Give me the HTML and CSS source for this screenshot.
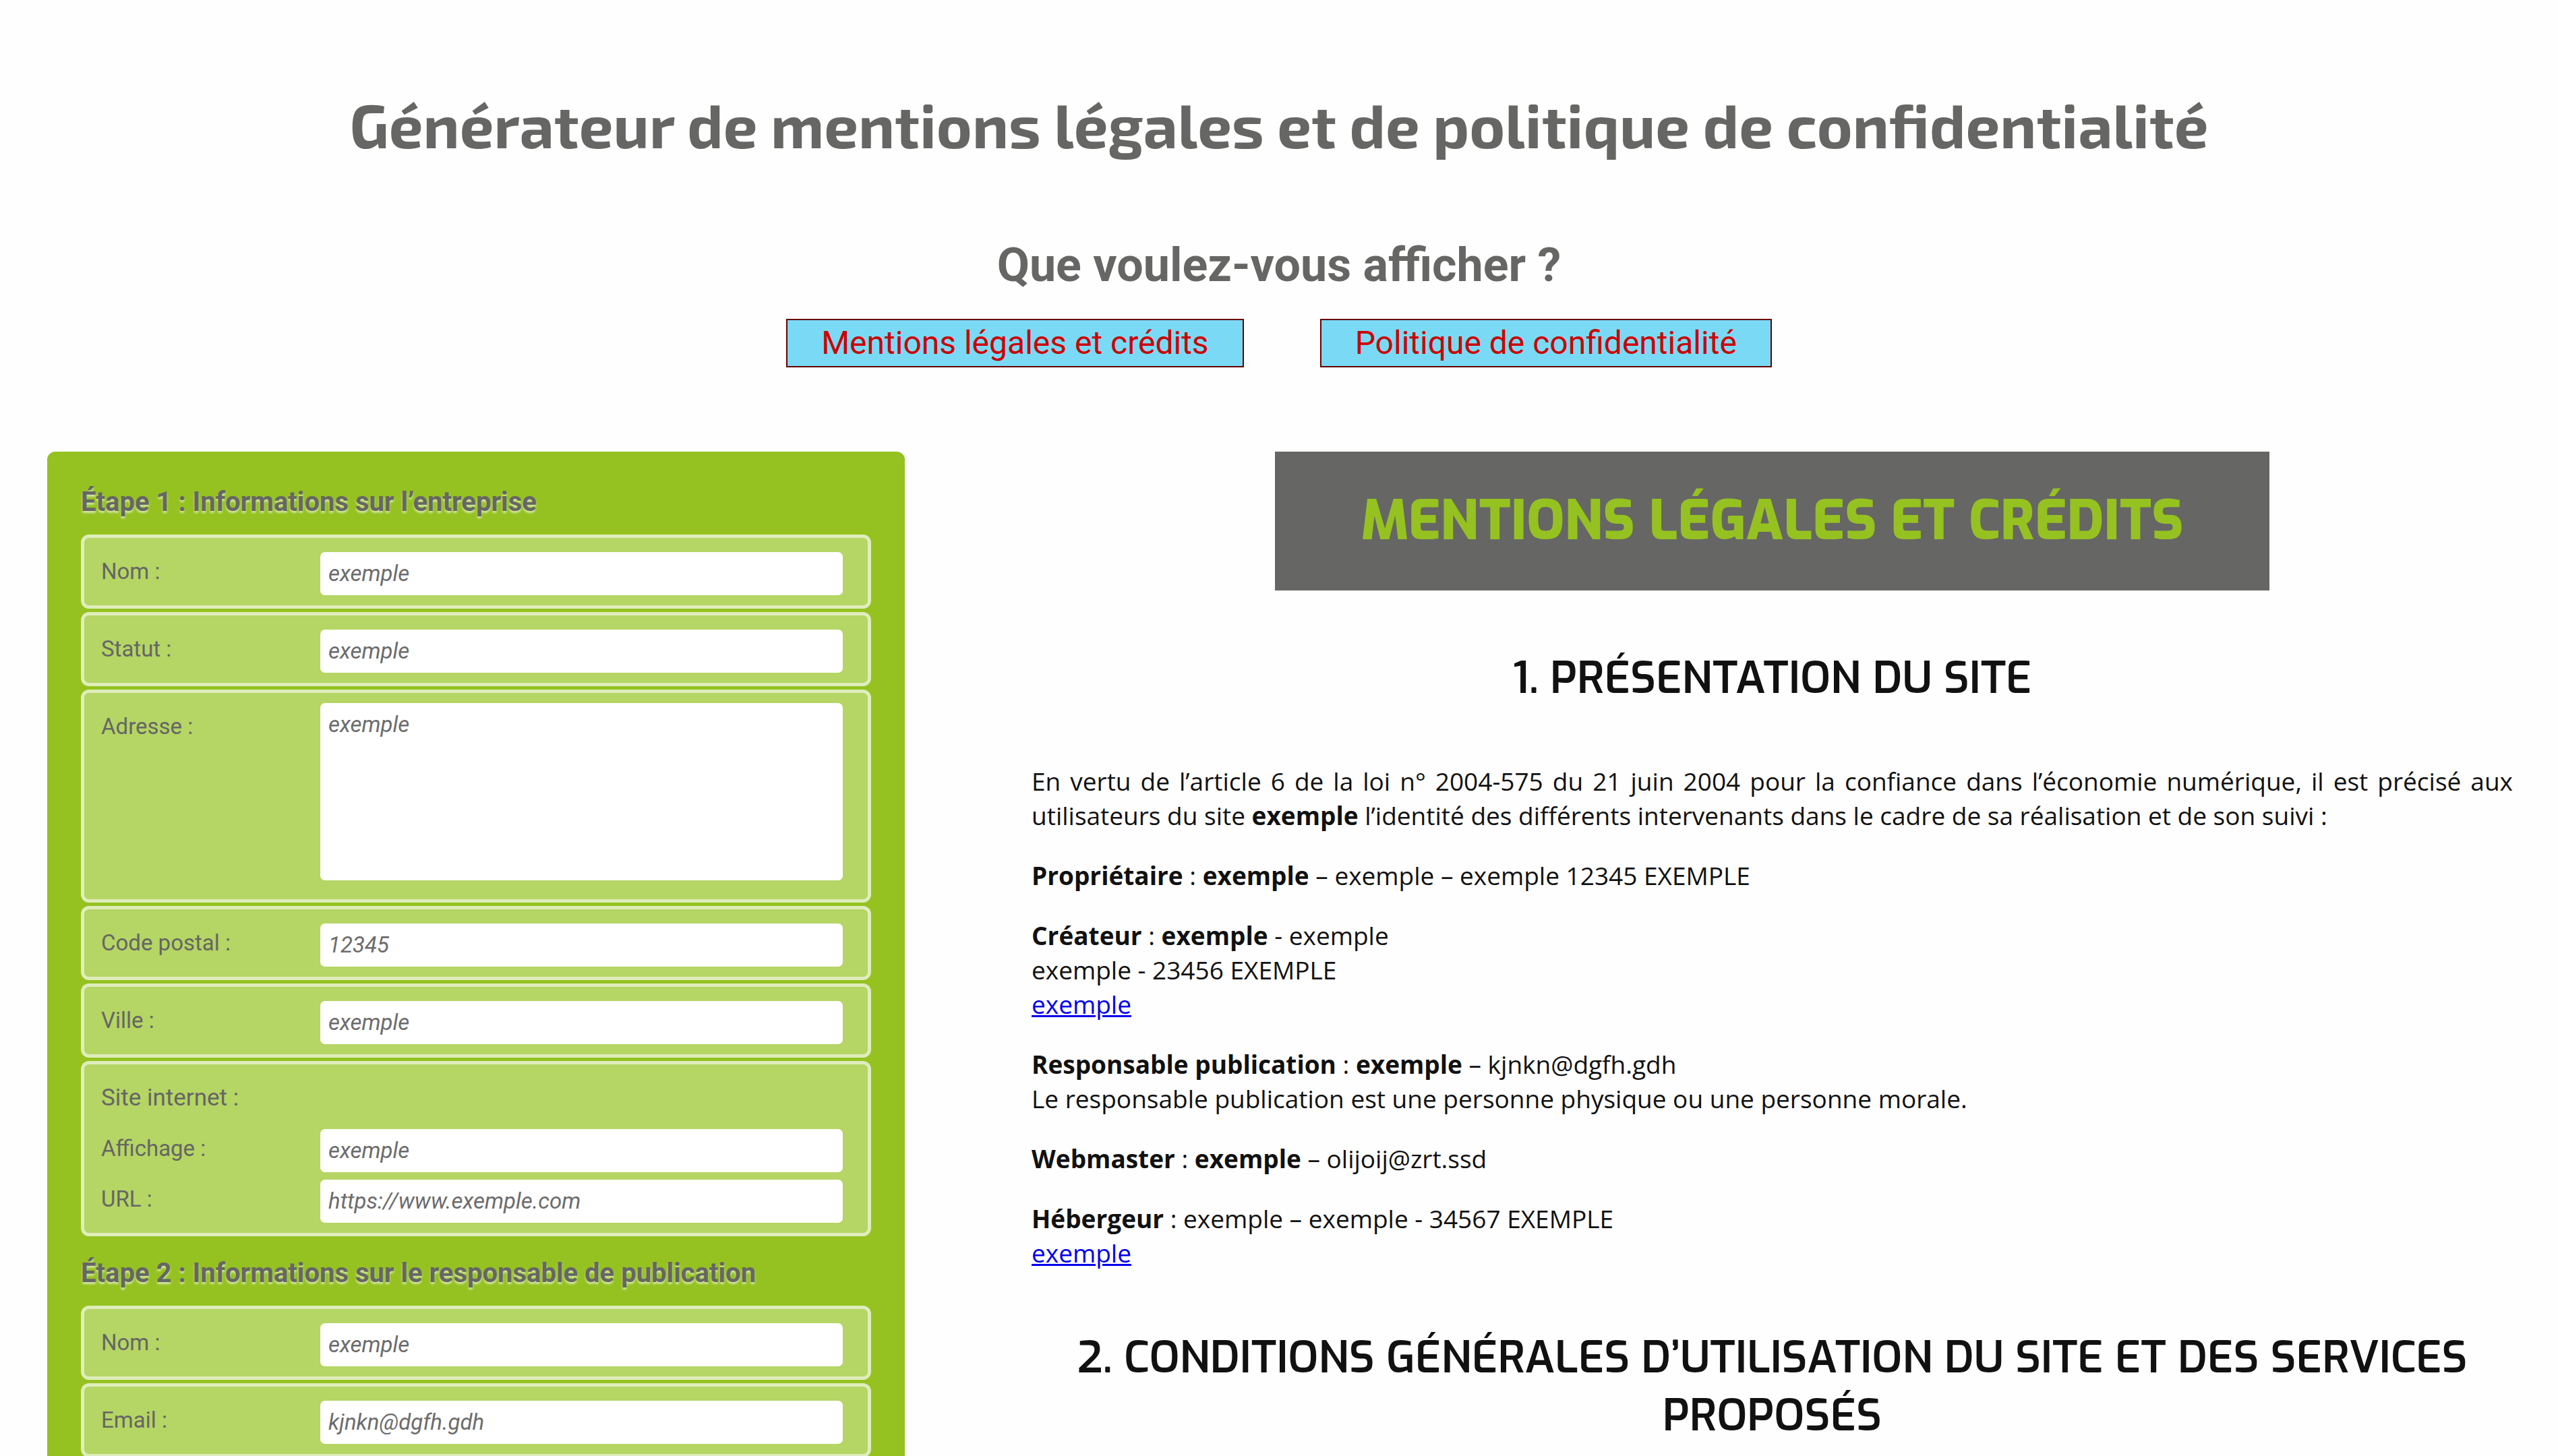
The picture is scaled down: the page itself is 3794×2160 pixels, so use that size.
FILE: index.html
```html
<!DOCTYPE html>
<html lang="fr">
<head>
<meta charset="utf-8">
<title>Générateur de mentions légales</title>
<link rel="stylesheet" href="styles.css">
</head>
<body>
<header class="header">
  <h1 class="title">Générateur de mentions légales et de politique de confidentialité</h1>
  <h2 class="question">Que voulez-vous afficher ?</h2>
  <div class="choices">
    <button type="button" class="choice">Mentions légales et crédits</button>
    <button type="button" class="choice">Politique de confidentialité</button>
  </div>
</header>
<main class="main">
  <form class="form">
    <h3 class="step">Étape 1 : Informations sur l’entreprise</h3>
    <div class="rows">
      <div class="row"><label for="nom">Nom :</label><input id="nom" type="text" value="exemple"></div>
      <div class="row"><label for="statut">Statut :</label><input id="statut" type="text" value="exemple"></div>
      <div class="row"><label for="adresse">Adresse :</label><textarea id="adresse">exemple</textarea></div>
      <div class="row"><label for="cp">Code postal :</label><input id="cp" type="text" value="12345"></div>
      <div class="row"><label for="ville">Ville :</label><input id="ville" type="text" value="exemple"></div>
      <div class="row">
        <span class="group">Site internet :</span>
        <label for="affichage">Affichage :</label><input id="affichage" type="text" value="exemple">
        <label for="url">URL :</label><input id="url" type="url" value="https://www.exemple.com">
      </div>
    </div>
    <h3 class="step">Étape 2 : Informations sur le responsable de publication</h3>
    <div class="rows">
      <div class="row"><label for="resp-nom">Nom :</label><input id="resp-nom" type="text" value="exemple"></div>
      <div class="row"><label for="resp-email">Email :</label><input id="resp-email" type="email" value="kjnkn@dgfh.gdh"></div>
    </div>
  </form>
  <article class="legal">
    <h1 class="banner">MENTIONS LÉGALES ET CRÉDITS</h1>
    <h2 class="section">1. PRÉSENTATION DU SITE</h2>
    <p>En vertu de l’article 6 de la loi n° 2004-575 du 21 juin 2004 pour la confiance dans l’économie numérique, il est précisé aux utilisateurs du site <strong>exemple</strong> l’identité des différents intervenants dans le cadre de sa réalisation et de son suivi :</p>
    <p><strong>Propriétaire</strong> : <strong>exemple</strong> – exemple – exemple 12345 EXEMPLE</p>
    <p><strong>Créateur</strong> : <strong>exemple</strong> - exemple<br>exemple - 23456 EXEMPLE<br><a href="#">exemple</a></p>
    <p><strong>Responsable publication</strong> : <strong>exemple</strong> – kjnkn@dgfh.gdh<br>Le responsable publication est une personne physique ou une personne morale.</p>
    <p><strong>Webmaster</strong> : <strong>exemple</strong> – olijoij@zrt.ssd</p>
    <p><strong>Hébergeur</strong> : exemple – exemple - 34567 EXEMPLE<br><a href="#">exemple</a></p>
    <h2 class="section">2. CONDITIONS GÉNÉRALES D’UTILISATION DU SITE ET DES SERVICES PROPOSÉS</h2>
  </article>
</main>
</body>
</html>
```
FILE: styles.css
```css
* { box-sizing: border-box; }

body {
  margin: 0;
  background: #fefefe;
  color: #666664;
  font-family: Roboto, sans-serif;
}

h1, h2, h3, p { margin: 0; }

.header {
  display: flex;
  flex-direction: column;
  align-items: center;
  padding-top: 130px;
}

.title {
  font: bold 90px/108px "Exo 2", sans-serif;
  text-align: center;
}

.question {
  margin-top: 114px;
  font-size: 70px;
  line-height: 82px;
}

.choices {
  display: flex;
  gap: 113px;
  margin-top: 39px;
}

.choice {
  padding: 6px 50px;
  border: 2px solid #660000;
  border-radius: 0;
  background: #7adaf5;
  color: #cc0000;
  font: 48px/56px Roboto, sans-serif;
}

.main {
  display: grid;
  grid-template-columns: 1272fr 2197fr;
  gap: 188px;
  align-items: start;
  padding: 125px 67px 0 70px;
}

.form {
  padding: 50px;
  border-radius: 12px;
  background: #95c221;
}

.step {
  margin-bottom: 23px;
  font-size: 40px;
  line-height: 50px;
  text-shadow: 0 3px 3px rgba(255, 255, 255, 0.6);
}

.rows {
  display: flex;
  flex-direction: column;
  gap: 5px;
  margin-bottom: 30px;
}

.row {
  display: grid;
  grid-template-columns: 325px 1fr;
  grid-auto-rows: minmax(75px, auto);
  align-items: center;
  padding: 15px 37px 10px 25px;
  border: 5px solid #dfedbc;
  border-radius: 12px;
  background: #b5d564;
}

.row label,
.group {
  align-self: start;
  font-size: 33px;
  line-height: 70px;
}

.group {
  grid-column: 1 / -1;
  font-size: 35px;
}

.row input,
.row textarea {
  display: block;
  width: 100%;
  height: 64px;
  margin: 0;
  padding: 12px;
  border: 0;
  border-radius: 7px;
  background: #fff;
  color: #6c6c6c;
  font: italic 33px/40px Roboto, sans-serif;
}

.row textarea {
  height: 263px;
  margin-bottom: 18px;
  resize: none;
}

.legal {
  color: #111;
  font: 37px/51px "Open Sans", sans-serif;
  text-align: justify;
}

.legal p { margin-bottom: 38px; }

.banner {
  width: fit-content;
  margin: 0 auto;
  padding: 50px 127px;
  background: #666664;
  color: #95c221;
  font: 800 80px/106px Exo, "Exo 2", sans-serif;
}

.section {
  margin: 87px 0 84px;
  font: 600 65px/86px Exo, "Exo 2", sans-serif;
  text-align: center;
}
```
